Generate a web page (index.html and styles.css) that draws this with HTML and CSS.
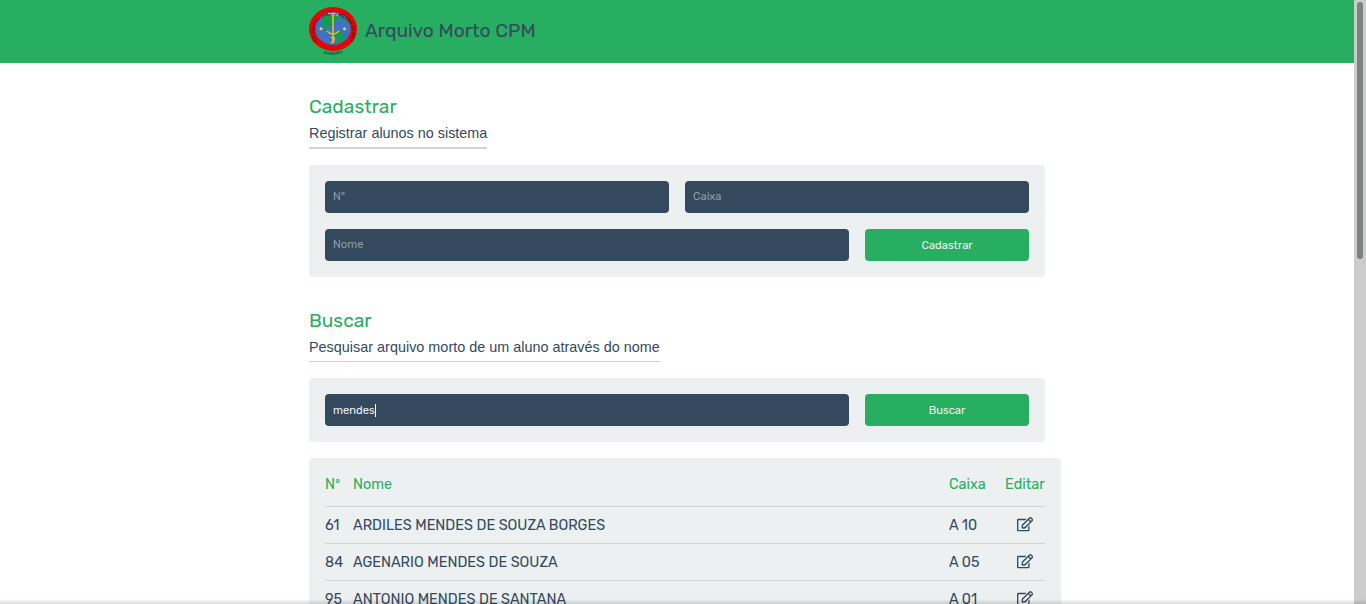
FILE: index.html
```html
<!DOCTYPE html>
<html lang="pt-BR">
<head>
<meta charset="utf-8">
<title>Arquivo Morto CPM</title>
<link rel="stylesheet" href="styles.css">
</head>
<body>
<svg width="0" height="0" class="defs">
  <symbol id="edit" viewBox="0 0 576 512"><path fill="currentColor" d="M402.3 344.9l32-32c5-5 13.7-1.5 13.7 5.7V464c0 26.5-21.5 48-48 48H48c-26.5 0-48-21.5-48-48V112c0-26.5 21.5-48 48-48h273.5c7.1 0 10.7 8.6 5.7 13.7l-32 32c-1.5 1.5-3.5 2.3-5.7 2.3H48v352h352V350.5c0-2.1.8-4.1 2.3-5.6zm156.6-201.8L296.3 405.7l-90.4 10c-26.2 2.9-48.5-19.2-45.6-45.6l10-90.4L432.9 17.1c22.9-22.9 59.9-22.9 82.7 0l43.2 43.2c22.9 22.9 22.9 60 .1 82.8zM460.1 174L402 115.9 216.2 301.8l-7.3 65.3 65.3-7.3L460.1 174zm64.8-79.7l-43.2-43.2c-4.1-4.1-10.8-4.1-14.8 0L436 82l58.1 58.1 30.9-30.9c4-4.2 4-10.8-.1-14.9z"/></symbol>
</svg>
<div class="page">
  <header class="header">
    <div class="container brand">
      <svg class="logo" viewBox="0 0 48 48">
        <defs>
          <path id="ring" d="M7.500 34A19 17.400 0 1 1 40.500 34"/>
          <path id="foot" d="M14 46.200Q24 49.800 36 45.200"/>
        </defs>
        <ellipse cx="24" cy="22" rx="24" ry="22" fill="#e50505"/>
        <ellipse cx="24" cy="21.500" rx="17.800" ry="16.400" fill="#3f72c6"/>
        <path fill="#139b50" d="M12.500 13l4-5 6-2 6 1 2 3-2 4-4 1-2 4-3 0-2 3 4 3-4-1-4-5zM25 24l6 0 5 4-1 5-6 4-2-1 1-5-4-4zM33 8l4 3 2 4-5-2z"/>
        <path fill="#eef6f2" d="M18.500 6.300l5.500-.8 5 .8-1 1.200 2 2-3.500-1.500-3 .5z"/>
        <path d="M24 8v28M18 24q3 3 6 3t6-3M22 31q4-2 3 2t-3 2" fill="none" stroke="#eebd16" stroke-width="1.600"/>
        <circle cx="12" cy="21.700" r="1.500" fill="#f6d915"/>
        <circle cx="35.500" cy="21.700" r="1.500" fill="#f6d915"/>
        <text class="ring-text"><textPath href="#ring">COLÉGIO DA POLÍCIA MILITAR DA BAHIA</textPath></text>
        <text class="foot-text"><textPath href="#foot">JUAZEIRO</textPath></text>
      </svg>
      <h1 class="brand-name">Arquivo Morto CPM</h1>
    </div>
  </header>
  <main class="container">
    <section class="section">
      <h2 class="title">Cadastrar</h2>
      <p class="subtitle">Registrar alunos no sistema</p>
      <form class="card form">
        <div class="row halves">
          <div class="field placeholder">N°</div>
          <div class="field placeholder">Caixa</div>
        </div>
        <div class="row action">
          <div class="field placeholder">Nome</div>
          <button type="button" class="button">Cadastrar</button>
        </div>
      </form>
    </section>
    <section class="section">
      <h2 class="title">Buscar</h2>
      <p class="subtitle subtitle-thin">Pesquisar arquivo morto de um aluno através do nome</p>
      <form class="card form">
        <div class="row action">
          <div class="field"><span>mendes</span><i class="caret"></i></div>
          <button type="button" class="button">Buscar</button>
        </div>
      </form>
    </section>
    <div class="card results">
      <div class="line head"><span>Nº</span><span>Nome</span><span>Caixa</span><span>Editar</span></div>
      <div class="line"><span>61</span><span>ARDILES MENDES DE SOUZA BORGES</span><span>A 10</span><svg class="edit"><use href="#edit"/></svg></div>
      <div class="line"><span>84</span><span>AGENARIO MENDES DE SOUZA</span><span>A 05</span><svg class="edit"><use href="#edit"/></svg></div>
      <div class="line"><span>95</span><span>ANTONIO MENDES DE SANTANA</span><span>A 01</span><svg class="edit"><use href="#edit"/></svg></div>
    </div>
  </main>
</div>
<div class="scrollbar"><div class="thumb"></div></div>
<div class="shade"></div>
</body>
</html>
```
FILE: styles.css
```css
* { box-sizing: border-box; margin: 0; padding: 0; }
body {
  display: flex;
  height: 604px;
  overflow: hidden;
  background: #fff;
  color: #34495e;
  font-family: Rubik, Roboto, sans-serif;
  font-size: 14.4px;
}
.defs { position: absolute; }
.page { flex: 1; height: 604px; overflow: hidden; }
.header { height: 63px; background: #27ae60; }
.container { width: 736px; margin: 0 auto; }
.brand { display: flex; align-items: center; gap: 8px; height: 62px; }
.logo { width: 48px; height: 48px; overflow: visible; }
.ring-text, .foot-text { font-family: "Liberation Sans", sans-serif; font-weight: bold; }
.ring-text { font-size: 4.2px; letter-spacing: -.15px; fill: #651014; }
.foot-text { font-size: 4px; fill: #174b30; }
.brand-name { font-size: 19.2px; font-weight: 400; line-height: 24px; white-space: nowrap; }
.section { padding-top: 32px; }
.title { color: #27ae60; font-size: 19.2px; font-weight: 400; line-height: 23px; }
.subtitle {
  width: fit-content;
  height: 31px;
  padding-top: 7px;
  margin-bottom: 16px;
  border-bottom: 2px solid #ced4d9;
  font: 14.4px/17px "Liberation Sans", sans-serif;
  white-space: nowrap;
}
.subtitle-thin { height: 30px; border-bottom: 1px solid #ced1d3; letter-spacing: .01px; }
.card { background: #ecf0f1; border-radius: 4px; padding: 16px; }
.form { display: grid; gap: 16px; }
.row { display: grid; gap: 16px; }
.halves { grid-template-columns: 1fr 1fr; }
.action { grid-template-columns: 524px 164px; }
.field {
  display: flex;
  align-items: center;
  height: 32px;
  padding: 0 8px;
  border-radius: 4px;
  background: #34495e;
  color: #ecf0f1;
  font-size: 11.2px;
}
.placeholder { color: #909ca5; padding-bottom: 2px; }
.caret { width: 1px; height: 13px; background: #fff; }
.button {
  height: 32px;
  border: 0;
  border-radius: 4px;
  background: #27ae60;
  color: #ecf0f1;
  font: inherit;
  font-size: 11.2px;
}
.results { width: 752px; height: 190px; margin-top: 16px; }
.line {
  display: grid;
  grid-template-columns: 28px 596px 56px 40px;
  align-items: center;
  height: 37px;
  border-bottom: 1px solid #ced3d6;
  white-space: nowrap;
}
.head { height: 33px; padding-bottom: 12px; color: #27ae60; }
.edit { display: block; width: 16.2px; height: 14.4px; justify-self: center; margin-bottom: 1px; }
.scrollbar { width: 12px; padding: 2px 3px; background: #cdcdcd; }
.thumb { height: 257px; border-radius: 3px; background: #7f8282; }
.shade {
  position: absolute;
  left: 0;
  bottom: 0;
  width: 1366px;
  height: 5px;
  background: linear-gradient(rgba(0,0,0,0), rgba(0,0,0,.14));
}
```
